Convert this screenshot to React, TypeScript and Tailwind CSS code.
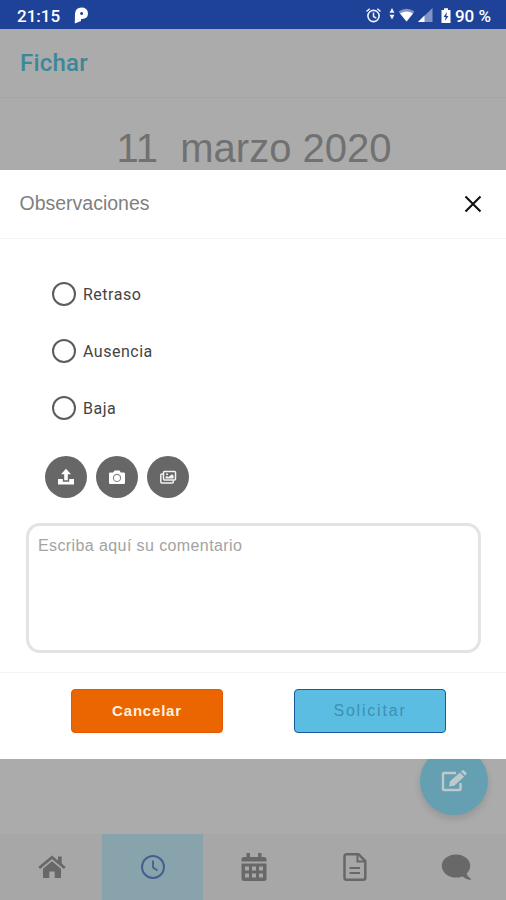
import { ReactNode } from "react";

const reasons = ["Retraso", "Ausencia", "Baja"];

function StatusIcons() {
  return (
    <svg width="86" height="18" viewBox="0 0 86 18" fill="none">
      {/* alarm */}
      <circle cx="8.500" cy="9" r="5.600" stroke="#eef1fa" strokeWidth="1.600" />
      <path d="M8.500 5.500v4l2.800 1.600M1.500 4.500l3.200-2.800M15.500 4.500l-3.200-2.800" stroke="#eef1fa" strokeWidth="1.500" />
      {/* data arrows */}
      <path d="M27 1l2.500 4.800h-5zM27 12.500l2.500-4.800h-5z" fill="#eef1fa" />
      {/* wifi */}
      <path d="M33.500 4.500Q41.500-1 49.500 4.500L41.500 14.500z" fill="#8194c8" />
      <path d="M35 6.400Q41.500 2.500 48 6.400L41.500 14.500z" fill="#fff" />
      {/* signal */}
      <path d="M67.500 1V15H53z" fill="#8194c8" />
      <path d="M59.500 8.500V15H53z" fill="#fff" />
      {/* battery */}
      <path d="M76.500 3h2.500V1.200h4V3h2.500V16h-9z" fill="#fff" />
      <path d="M82 5L78.500 10h2.200l-.8 4L83.500 9h-2.200z" fill="#1f4299" />
    </svg>
  );
}

function HomeIcon() {
  return (
    <svg width="28" height="24" viewBox="0 0 28 24">
      <path d="M1.200 13L14 2.200 26.800 13" fill="none" stroke="currentColor" strokeWidth="2.700" />
      <path d="M20 1.500h3.700v9L20 7.200zM5 13.800l9-7.500 9 7.500V23h-6.300v-6.500h-5.400V23H5z" fill="currentColor" />
    </svg>
  );
}

function ClockIcon() {
  return (
    <svg width="26" height="26" viewBox="0 0 26 26" fill="none" stroke="currentColor">
      <circle cx="13" cy="13" r="11" strokeWidth="2" />
      <path d="M13 6.500V13.500l4.500 3" strokeWidth="1.800" />
    </svg>
  );
}

function CalendarIcon() {
  return (
    <svg width="26" height="30" viewBox="0 0 26 30" fill="currentColor">
      <path d="M5.500 1h3.400v4h8.200V1h3.400v4H23a2.500 2.500 0 0 1 2.500 2.500V9.500H.5V7.500A2.500 2.500 0 0 1 3 5h2.500z" />
      <path
        fillRule="evenodd"
        d="M.5 11.500h25v15a2.500 2.500 0 0 1-2.500 2.500H3a2.500 2.500 0 0 1-2.500-2.500zM4 14.500v4h4v-4zm7 0v4h4v-4zm7 0v4h4v-4zM4 21.500v4h4v-4zm7 0v4h4v-4zm7 0v4h4v-4z"
      />
    </svg>
  );
}

function DocumentIcon() {
  return (
    <svg width="24" height="30" viewBox="0 0 24 30" fill="none" stroke="currentColor">
      <path
        d="M3.500 2.200h12l6.800 6.800v16.800a2 2 0 0 1-2 2H3.500a2 2 0 0 1-2-2V4.200a2 2 0 0 1 2-2z"
        strokeWidth="2.500"
      />
      <path d="M14.500 2.200V9.500h7.500" strokeWidth="2" />
      <path d="M6.500 16h10.500M6.500 21h10.500" strokeWidth="2" />
    </svg>
  );
}

function ChatIcon() {
  return (
    <svg width="30" height="28" viewBox="0 0 30 28" fill="currentColor">
      <ellipse cx="15" cy="13" rx="14.200" ry="11.500" />
      <path d="M20 22q4.500 4.500 9.500 5l.3-1.500q-3.500-1.500-4.300-6z" />
    </svg>
  );
}

function UploadIcon() {
  return (
    <svg width="18" height="18" viewBox="0 0 18 18" fill="#fff">
      <path d="M9 .8l5 5.500h-3.200v6H7.200v-6H4z" />
      <path d="M1 11h4.800v2.700h6.400V11H17v5.500H1z" />
    </svg>
  );
}

function CameraIcon() {
  return (
    <svg width="18" height="18" viewBox="0 0 18 18">
      <path d="M2.200 4.500h3L6.500 2.500h5l1.300 2h3A1.200 1.200 0 0 1 17 5.700v9a1.200 1.200 0 0 1-1.200 1.200H2.200A1.200 1.200 0 0 1 1 14.700v-9a1.200 1.200 0 0 1 1.200-1.200z" fill="#fff" />
      <circle cx="9" cy="9.900" r="3.600" fill="none" stroke="#8b8b8b" strokeWidth="1.200" />
    </svg>
  );
}

function GalleryIcon() {
  return (
    <svg width="18" height="18" viewBox="0 0 18 18" fill="none" stroke="#f3f3f3" strokeWidth="1.500">
      <rect x="4.500" y="3.500" width="12" height="8.500" rx="1" />
      <path d="M4 6H2.800a1 1 0 0 0-1 1v7a1 1 0 0 0 1 1h10.500a1 1 0 0 0 1-1v-1.500" />
      <path d="M6.500 10.500V9l1.500-1 1.300 1L13 6.200l1.600 1.500v2.800z" fill="#f3f3f3" stroke="none" />
      <circle cx="8" cy="6.300" r="1" fill="#f3f3f3" stroke="none" />
    </svg>
  );
}

function EditIcon() {
  return (
    <svg width="28" height="24" viewBox="0 0 28 24">
      <path d="M16 4H4a1 1 0 0 0-1 1v15a1 1 0 0 0 1 1h15.500a1 1 0 0 0 1-1v-6" fill="none" stroke="currentColor" strokeWidth="2.400" />
      <path d="M9 17.500l1-5.200L20 3.500l4.200 4.300-10 9zM21 2.500l1.300-1.200q.8-.6 1.500 0l2.500 2.500q.7.700 0 1.500L25.200 6.800z" fill="currentColor" />
    </svg>
  );
}

const tabs: { id: string; icon: ReactNode; active?: boolean }[] = [
  { id: "home", icon: <HomeIcon /> },
  { id: "clock", icon: <ClockIcon />, active: true },
  { id: "calendar", icon: <CalendarIcon /> },
  { id: "documents", icon: <DocumentIcon /> },
  { id: "chat", icon: <ChatIcon /> },
];

const attachments = [
  { id: "upload", icon: <UploadIcon /> },
  { id: "camera", icon: <CameraIcon /> },
  { id: "gallery", icon: <GalleryIcon /> },
];

export default function App() {
  return (
    <div className="w-[506px] h-[900px] flex flex-col overflow-hidden bg-[#ababab] font-['Liberation_Sans',Arial,sans-serif]">
      <div className="h-[28.500px] shrink-0 bg-[#1f4299] flex items-center justify-between pl-[17px] pr-[15px] pt-[3px] text-white font-['Roboto',sans-serif] font-medium">
        <div className="flex items-center gap-[14px]">
          <span className="text-[17px] leading-5">21:15</span>
          <svg width="15" height="17" viewBox="0 0 15 17">
            <path
              fillRule="evenodd"
              d="M1 6.500Q1.500.5 7.500.5t6.500 5.800q0 5.700-6 5.700H7V14L.8 16.500zM7.500 5a1.500 1.500 0 1 0 .1 3A1.500 1.500 0 0 0 7.500 5z"
              fill="#fff"
            />
          </svg>
        </div>
        <div className="flex items-center gap-[4px]">
          <StatusIcons />
          <span className="text-[17px] leading-5">90 %</span>
        </div>
      </div>

      <header className="h-[69.500px] shrink-0 flex items-center px-5 pt-[1px] border-b border-[#a6a6a6]">
        <h1 className="text-[24px] tracking-[0.200px] font-medium text-[#3d8799] font-['Roboto',sans-serif]">
          Fichar
        </h1>
      </header>
      <div className="h-[72px] shrink-0 pt-[27px] pl-[2px] text-center text-[40px] leading-[46px] text-[#717171] whitespace-pre">
        11  marzo 2020
      </div>

      <section className="relative z-10 h-[589px] shrink-0 bg-white flex flex-col">
        <div className="h-[69px] shrink-0 border-b border-[#f3f3f3] flex items-center justify-between pl-[19.500px] pr-[24px]">
          <h2 className="text-[19.500px] text-[#808080]">Observaciones</h2>
          <button aria-label="Cerrar">
            <svg width="18" height="18" viewBox="0 0 18 18" fill="none" stroke="#111" strokeWidth="2.100">
              <path d="M1.500 1.500l15 15M16.500 1.500l-15 15" />
            </svg>
          </button>
        </div>

        <div className="h-[434px] shrink-0 border-b border-[#f3f3f3] px-[26px] pt-[42.500px]">
          <div className="pl-[26px] flex flex-col gap-[33px]">
            {reasons.map((reason) => (
              <label key={reason} className="h-6 flex items-center gap-[7px]">
                <span className="w-6 h-6 rounded-full border-2 border-[#5c5c5c]" />
                <span className="text-[16px] tracking-[0.500px] text-[#444] pt-[2px] font-['Roboto',sans-serif]">
                  {reason}
                </span>
              </label>
            ))}
          </div>

          <div className="flex gap-[9px] pl-[19px] mt-9">
            {attachments.map((item) => (
              <button
                key={item.id}
                className="w-[42px] h-[42px] rounded-full bg-[#676767] flex items-center justify-center"
              >
                {item.icon}
              </button>
            ))}
          </div>

          <textarea
            className="block mt-[25px] w-[455px] h-[130px] resize-none rounded-[14px] border-[3px] border-[#e3e3e3] bg-white px-[9px] pt-[8px] text-[16px] leading-[24px] tracking-[0.400px] placeholder:text-[#a3a3a3] outline-none"
            placeholder="Escriba aquí su comentario"
          />
        </div>

        <div className="flex justify-between pt-4 pl-[71px] pr-[60px]">
          <button className="w-[152px] h-[44px] rounded-[4px] border border-[#e55800] bg-[#eb6600] text-[#fff0df] font-bold text-[15px] tracking-[0.800px]">
            Cancelar
          </button>
          <button className="w-[152px] h-[44px] rounded-[4px] border-[1.500px] border-[#1c5a9e] bg-[#5cbde2] text-[#3c91b1] text-[16px] tracking-[1.800px]">
            Solicitar
          </button>
        </div>
      </section>

      <div className="h-[75px] shrink-0 flex justify-end pr-[18px]">
        <button className="w-[68px] h-[68px] -mt-[12px] rounded-full bg-[#64a0b1] text-[#bfc8cb] shadow-[0_4px_7px_rgba(0,0,0,0.12)] flex items-center justify-center">
          <EditIcon />
        </button>
      </div>

      <nav className="h-[66px] shrink-0 grid grid-cols-5 pl-[1px] bg-[#a7a7a7]">
        {tabs.map((tab) => (
          <button
            key={tab.id}
            className={`flex items-center justify-center ${tab.active ? "bg-[#89a3ad] text-[#455f91]" : "text-[#686868]"}`}
          >
            {tab.icon}
          </button>
        ))}
      </nav>
    </div>
  );
}
